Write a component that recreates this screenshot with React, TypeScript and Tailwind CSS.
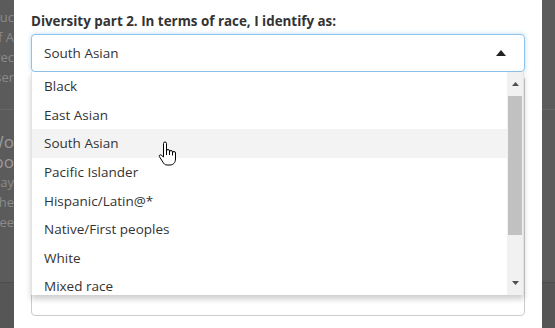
import { Fragment } from "react";

const OPTIONS = [
  "Black",
  "East Asian",
  "South Asian",
  "Pacific Islander",
  "Hispanic/Latin@*",
  "Native/First peoples",
  "White",
  "Mixed race",
];

const HandCursor = () => (
  <svg width="20" height="26" viewBox="0 0 20 26" className="absolute left-[126px] top-[69px]">
    <path
      d="M5.5 2.5a1.5 1.5 0 0 1 3 0V10a1.5 1.5 0 0 1 3 0v1a1.5 1.5 0 0 1 3 0v1a1.5 1.5 0 0 1 3 0v6c0 3.5-2.2 6-5.5 6h-3c-2 0-3.2-1.2-4.2-3L1.4 15.6c-.6-1.1.6-2.3 1.7-1.6L5.5 16Z"
      fill="#fff"
      stroke="#000"
      strokeWidth="1"
      strokeLinejoin="round"
    />
    <path d="M8.5 10v4M11.5 11v3M14.5 12v2.5" stroke="#000" strokeWidth="1" />
  </svg>
);

const Backdrop = ({ lines }: { lines: { t: string; big?: boolean }[] }) => (
  <div className="flex flex-col items-end">
    {lines.map((l, i) => (
      <Fragment key={i}>
        <span
          className={
            l.big
              ? "whitespace-nowrap text-[17px] leading-[20px] text-[#9a9a9a]"
              : "whitespace-nowrap text-[13px] leading-[20px] text-[#8a8a8a]"
          }
        >
          {l.t}
        </span>
      </Fragment>
    ))}
  </div>
);

export default function App() {
  return (
    <div className="flex h-[328px] w-[555px] overflow-hidden bg-[#5b5b5b] font-['Open_Sans','Lato',sans-serif]">
      {/* page behind the overlay, left side */}
      <div className="flex w-[14px] shrink-0 flex-col overflow-hidden">
        <div className="flex h-[110px] flex-col items-end border-b border-[#666] pt-[7px]">
          <Backdrop lines={[{ t: "Instruc" }, { t: "of A" }, { t: "direc" }, { t: "user" }]} />
        </div>
        <div className="flex h-[172px] flex-col items-end pt-[22px]">
          <Backdrop
            lines={[{ t: "Wo", big: true }, { t: "po", big: true }, { t: "say" }, { t: "the" }, { t: "See" }]}
          />
        </div>
        <div className="flex-1 border-t border-[#4e4e4e] bg-[#565656]" />
      </div>

      {/* modal */}
      <div className="relative w-[528px] shrink-0 bg-white px-[17px] pt-[11px] text-[#333]">
        <label className="block text-[13.4px] font-bold leading-[20px] text-[#333]">
          Diversity part 2. In terms of race, I identify as:
        </label>
        <div className="mt-[3px] flex h-[38px] items-center justify-between rounded-[4px] border border-[#8fc3ec] bg-white pl-[12px] pr-[18px] shadow-[0_0_4px_rgba(102,175,233,0.45)]">
          <span className="text-[13.5px] text-[#333]">South Asian</span>
          <svg width="10" height="6" viewBox="0 0 10 6">
            <path d="M0 6 5 0 10 6Z" fill="#222" />
          </svg>
        </div>
        <div className="mt-[4px] h-[240px] rounded-[4px] border border-[#ccc]" />

        {/* open dropdown list */}
        <div className="absolute left-[17px] top-[72px] flex h-[223px] w-[493px] overflow-hidden border-x border-[#e2e2e2] bg-white shadow-[0_4px_6px_rgba(0,0,0,0.2)]">
          <ul className="flex-1">
            {OPTIONS.map((o) => (
              <li
                key={o}
                className={
                  o === "South Asian"
                    ? "flex h-[28.6px] items-center bg-[#f3f3f3] pl-[12px] text-[13.5px] text-[#333]"
                    : "flex h-[28.6px] items-center pl-[12px] text-[13.5px] text-[#333]"
                }
              >
                {o}
              </li>
            ))}
          </ul>
          <div className="flex w-[16px] shrink-0 flex-col bg-[#f1f1f1]">
            <div className="flex h-[24px] items-center justify-center">
              <svg width="7" height="4" viewBox="0 0 7 4">
                <path d="M0 4 3.5 0 7 4Z" fill="#505050" />
              </svg>
            </div>
            <div className="mx-[1px] h-[139px] bg-[#c1c1c1]" />
            <div className="flex-1" />
            <div className="flex h-[24px] items-center justify-center">
              <svg width="7" height="4" viewBox="0 0 7 4">
                <path d="M0 0 3.5 4 7 0Z" fill="#505050" />
              </svg>
            </div>
          </div>
          <HandCursor />
        </div>
      </div>

      {/* page behind the overlay, right side */}
      <div className="flex flex-1 flex-col">
        <div className="h-[110px] border-b border-[#666]" />
        <div className="h-[172px]" />
        <div className="flex-1 border-t border-[#4e4e4e] bg-[#565656]" />
      </div>
    </div>
  );
}
